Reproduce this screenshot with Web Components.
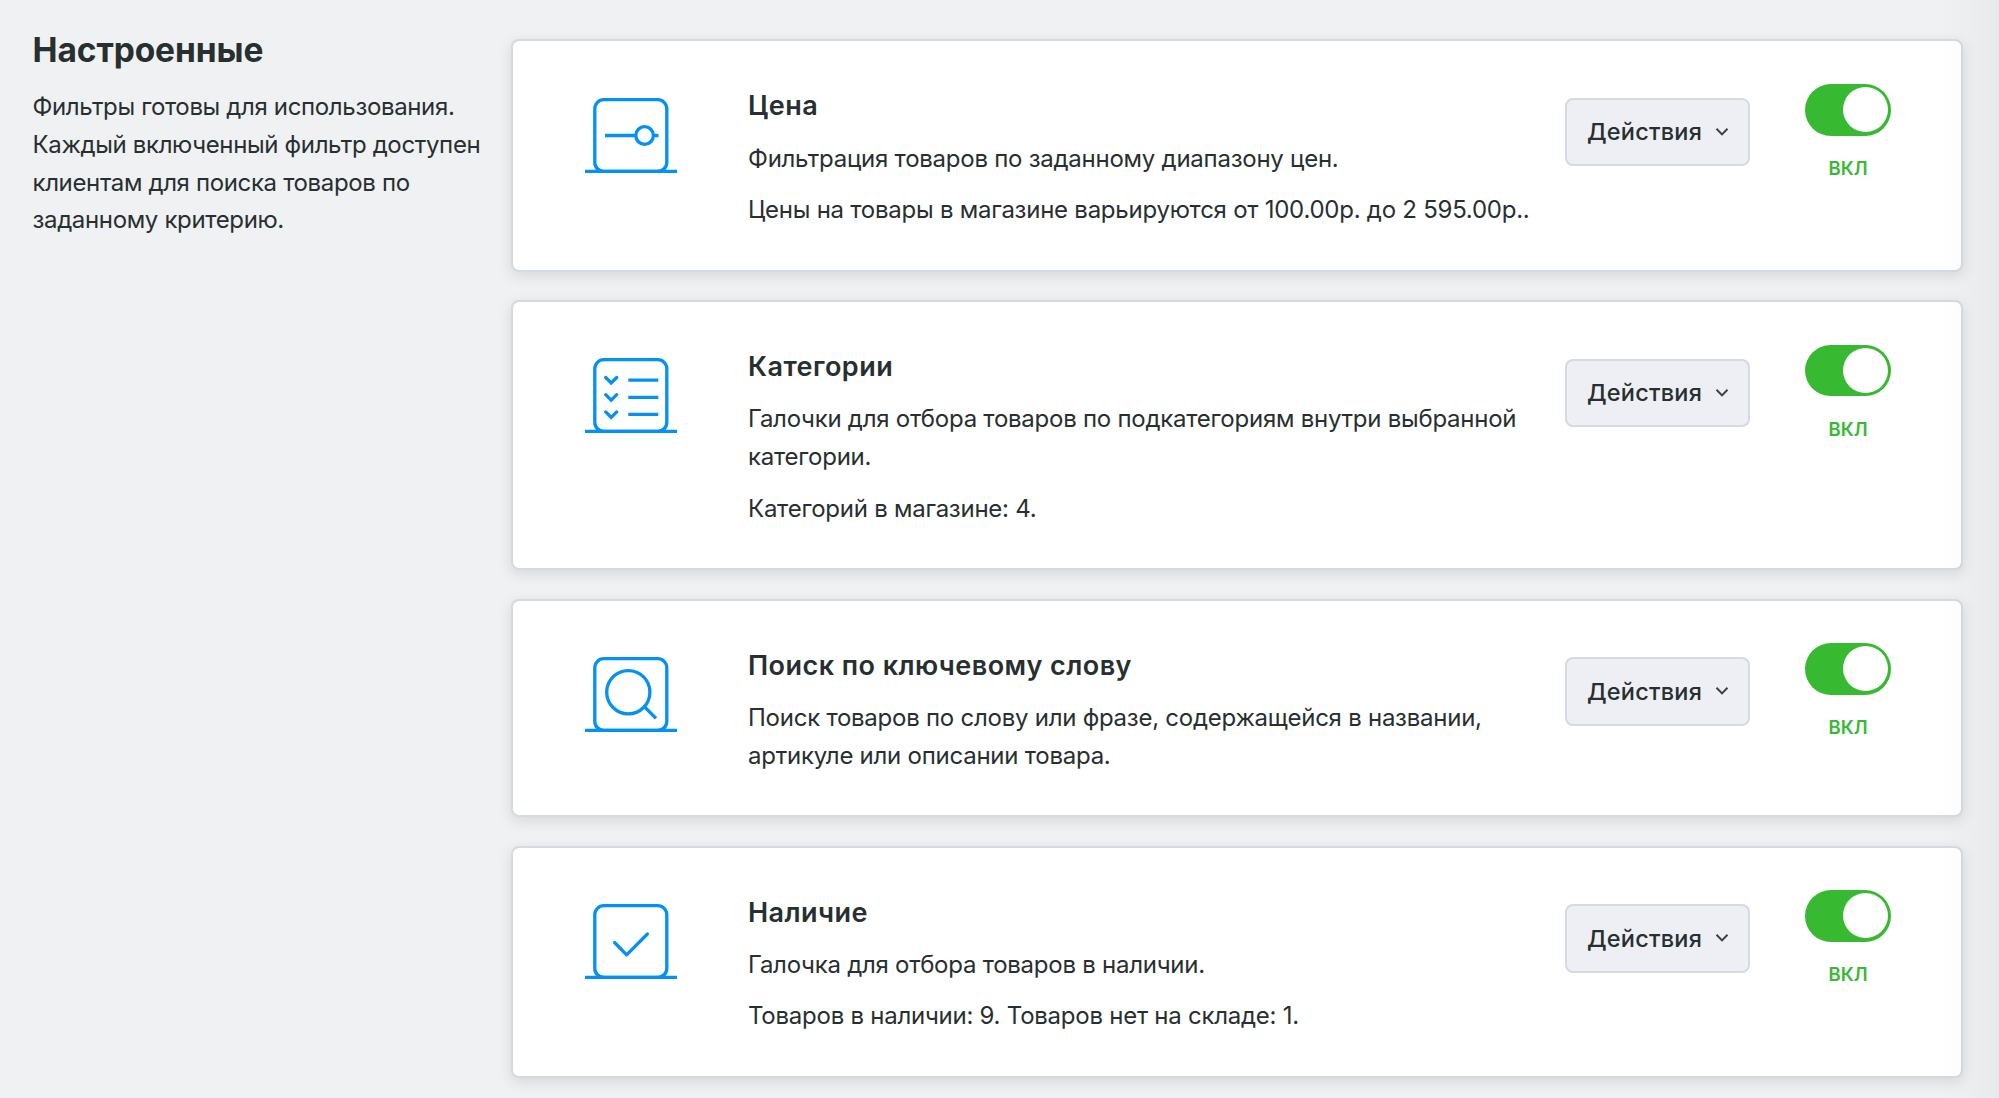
<!DOCTYPE html>
<html lang="ru">
<head>
<meta charset="utf-8">
<title>Фильтры</title>
<style>
  html, body { margin: 0; height: 100%; }
  body {
    background: #f0f1f3;
    color: #272f30;
    font-family: Inter, "Liberation Sans", sans-serif;
    overflow: hidden;
  }
</style>
</head>
<body>
<filters-page>
  <section-intro slot="intro" heading="Настроенные">Фильтры готовы для использования. Каждый включенный фильтр доступен клиентам для поиска товаров по заданному критерию.</section-intro>

  <filter-card heading="Цена" icon="range">
    <p>Фильтрация товаров по заданному диапазону цен.</p>
    <p>Цены на товары в магазине варьируются от 100.00р. до 2 595.00р..</p>
  </filter-card>
  <filter-card heading="Категории" icon="list">
    <p>Галочки для отбора товаров по подкатегориям внутри выбранной категории.</p>
    <p>Категорий в магазине: 4.</p>
  </filter-card>
  <filter-card heading="Поиск по ключевому слову" icon="search">
    <p>Поиск товаров по слову или фразе, содержащейся в названии, артикуле или описании товара.</p>
  </filter-card>
  <filter-card heading="Наличие" icon="check">
    <p>Галочка для отбора товаров в наличии.</p>
    <p>Товаров в наличии: 9. Товаров нет на складе: 1.</p>
  </filter-card>
</filters-page>

<script>
(() => {
  // Glyphs drawn inside the common icon frame (92x76 box).
  const ICONS = {
    range: '<path d="M20 37.5h31M69 37.5h4.5"/><circle cx="59.6" cy="37.5" r="8.8"/>',
    list: '<g stroke-linecap="round"><path d="M20.7 19.5l5.5 5.5 5.5-5.5M20.7 36.7l5.5 5.5 5.5-5.5M20.7 53.9l5.5 5.5 5.5-5.5"/></g><path d="M43.3 22.1h30M43.3 39.3h30M43.3 56.4h30"/>',
    search: '<circle cx="43.3" cy="35.2" r="21.6"/><path d="M59.2 49.5l11.8 11.8"/>',
    check: '<path stroke-linecap="round" stroke-linejoin="round" d="M29.6 38.5l12 12.3 20.8-20.8"/>'
  };

  function define(tag, html, setup) {
    const template = document.createElement('template');
    template.innerHTML = html;
    customElements.define(tag, class extends HTMLElement {
      constructor() {
        super();
        this.attachShadow({ mode: 'open' });
        this.shadowRoot.appendChild(template.content.cloneNode(true));
      }
      connectedCallback() {
        if (setup) setup(this, this.shadowRoot);
      }
    });
  }

  define('filter-icon', `
    <style>
      :host { display: block; width: 93px; height: 76px; }
      svg { display: block; fill: none; stroke: #0590f3; stroke-width: 3.3; }
    </style>
    <svg width="93" height="76" viewBox="0 0 93 76"></svg>
  `, (el, root) => {
    root.querySelector('svg').innerHTML =
      '<rect x="9.8" y="1.7" width="72" height="71.7" rx="9"/><path d="M0 73.4h92"/>' +
      (ICONS[el.getAttribute('name')] || '');
  });

  define('action-button', `
    <style>
      :host { display: block; }
      button {
        display: flex;
        align-items: center;
        gap: 13px;
        box-sizing: border-box;
        width: 185px;
        height: 68.5px;
        margin: 0;
        padding: 0 20px;
        border: 2px solid #d3dae1;
        border-radius: 8px;
        background: #eeeff4;
        color: inherit;
        font: 500 23.5px/1 Inter, "Liberation Sans", sans-serif;
        letter-spacing: 0.2px;
        white-space: nowrap;
      }
      svg { flex: none; fill: none; stroke: #3a4142; stroke-width: 2; }
    </style>
    <button type="button">
      <slot></slot>
      <svg width="14" height="10" viewBox="0 0 14 10"><path d="M1.5 1.8l5.5 5.6 5.5-5.6"/></svg>
    </button>
  `);

  define('toggle-switch', `
    <style>
      :host {
        display: flex;
        flex-direction: column;
        align-items: center;
        width: 86px;
        color: #37ba32;
      }
      .track {
        display: flex;
        justify-content: flex-end;
        box-sizing: border-box;
        width: 86px;
        height: 51.5px;
        padding: 3px;
        border-radius: 26px;
        background: #37ba32;
      }
      .knob { width: 45px; height: 45px; border-radius: 50%; background: #fff; }
      .state { margin-top: 19.5px; font-size: 18.5px; font-weight: 600; line-height: 26px; }
    </style>
    <div class="track"><div class="knob"></div></div>
    <div class="state"><slot></slot></div>
  `);

  define('section-intro', `
    <style>
      :host { display: block; }
      h2 { margin: 0; font-size: 33.5px; font-weight: 700; line-height: 40px; letter-spacing: -0.1px; }
      p { margin: 18px 0 0; font-size: 24px; line-height: 37.8px; letter-spacing: -0.35px; }
    </style>
    <h2></h2>
    <p><slot></slot></p>
  `, (el, root) => {
    root.querySelector('h2').textContent = el.getAttribute('heading');
  });

  define('filter-card', `
    <style>
      :host {
        display: grid;
        grid-template-columns: 93px 887px 185px 141px;
        align-items: start;
        box-sizing: border-box;
        padding: 45px 0 41px 72px;
        border: 2px solid #d3dae1;
        border-radius: 8px;
        background: #fff;
        box-shadow: 0 4px 14px rgba(39, 47, 48, 0.13);
      }
      filter-icon { margin-top: 11.4px; }
      .text {
        margin: 0 30px 0 70px;
        font-size: 24px;
        line-height: 37.85px;
        letter-spacing: -0.25px;
      }
      h3 { margin: 0 0 13.2px; font-size: 27px; font-weight: 600; line-height: 40px; letter-spacing: 0.45px; }
      ::slotted(p) { margin: 0 0 13.7px; }
      ::slotted(p:last-child) { margin-bottom: 0; }
      action-button { margin-top: 11.6px; }
      toggle-switch { margin: -2.3px 0 0 55px; }
    </style>
    <filter-icon></filter-icon>
    <div class="text"><h3></h3><slot></slot></div>
    <action-button>Действия</action-button>
    <toggle-switch>ВКЛ</toggle-switch>
  `, (el, root) => {
    root.querySelector('h3').textContent = el.getAttribute('heading');
    // the icon is already upgraded here, so it is swapped for a named one
    const icon = document.createElement('filter-icon');
    icon.setAttribute('name', el.getAttribute('icon'));
    root.querySelector('filter-icon').replaceWith(icon);
  });

  define('filters-page', `
    <style>
      :host {
        display: grid;
        grid-template-columns: 478.5px 1451.5px;
        box-sizing: border-box;
        width: 1999px;
        height: 1098px;
        padding-left: 32.5px;
        overflow: hidden;
        position: relative;
      }
      /* soft shade along the right edge, lies over the cards */
      :host::after {
        content: "";
        position: absolute;
        top: 0;
        right: 0;
        width: 60px;
        height: 100%;
        background: linear-gradient(to right, rgba(39, 47, 48, 0), rgba(39, 47, 48, 0.015) 50%, rgba(39, 47, 48, 0.045));
      }
      aside { width: 456px; padding-top: 30px; }
      main { display: flex; flex-direction: column; gap: 28.1px; padding-top: 39.4px; }
    </style>
    <aside><slot name="intro"></slot></aside>
    <main><slot></slot></main>
  `);
})();
</script>
</body>
</html>
